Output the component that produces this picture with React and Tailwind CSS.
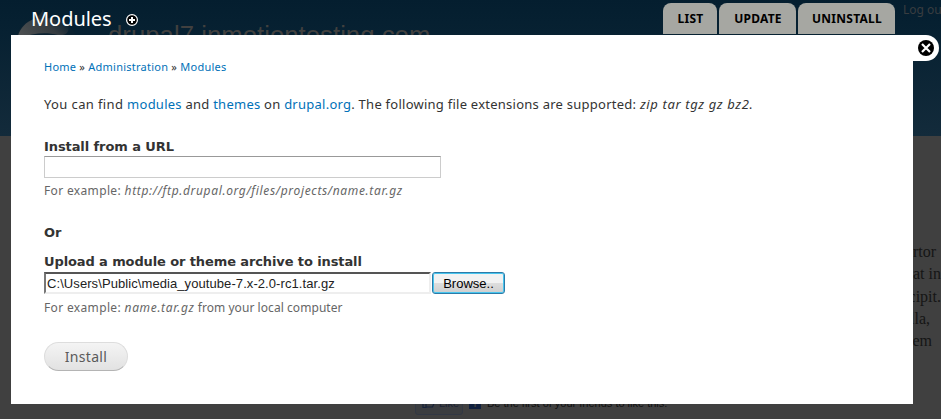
const tabs = [
  { label: "LIST", width: "w-[54px]" },
  { label: "UPDATE", width: "w-[77px]" },
  { label: "UNINSTALL", width: "w-[97px]" },
];

const excerpt = [
  { text: "tortor", pad: "pr-[5px]" },
  { text: "erat in", pad: "pr-0" },
  { text: "suscipit.", pad: "pr-0" },
  { text: "nulla,", pad: "pr-[11px]" },
  { text: "sem", pad: "pr-[9px]" },
];

function Logo() {
  return (
    <svg className="ml-[14px] mt-[6px] shrink-0" width="66" height="70" viewBox="0 0 66 70">
      <defs>
        <linearGradient id="shine" x1="0" y1="0.6" x2="1" y2="0.2">
          <stop offset="0" stopColor="#4b4e50" />
          <stop offset="0.6" stopColor="#353c41" />
          <stop offset="1" stopColor="#0b2130" />
        </linearGradient>
      </defs>
      <path d="M29 3C27 10 20 12 13 16C5 21 1 29 1 39C1 56 15 68 32 68C49 68 64 56 64 39C64 26 56 20 46 15C37 11 32 10 29 3Z" fill="#0b2231" />
      <path d="M4 30C6 22 12 16 20 13C30 10 46 13 54 20C56 26 52 30 44 29C32 26 20 27 4 32Z" fill="url(#shine)" />
      <path d="M29 3C27 9 23 11 19 13L34 13C31 10 30 7 29 3Z" fill="#202d35" />
    </svg>
  );
}

function Backdrop() {
  return (
    <div className="flex h-full flex-col bg-[#404040]">
      <div className="flex h-[136px] shrink-0 items-start bg-linear-to-b from-[#041e2f] to-[#132b3b]">
        <Logo />
        <div className="ml-[28px] mt-[20px] font-['Liberation_Sans',sans-serif] text-[25.7px] leading-[30px] tracking-[0.04px] whitespace-nowrap text-[#41403f]">
          drupal7.inmotiontesting.com
        </div>
        <div className="ml-auto w-[38px] font-['Noto_Sans',sans-serif] text-[12px] leading-5 whitespace-nowrap text-[#393d40]">
          Log ou
        </div>
      </div>
      <div className="flex flex-col items-end pt-[105px] font-['Liberation_Serif',serif] text-[16px] leading-[22.3px] text-[#151515]">
        {excerpt.map(({ text, pad }) => (
          <div key={text} className={pad}>{text}</div>
        ))}
      </div>
      <div className="mt-[38.5px] ml-[415px] flex h-6 items-center font-['Liberation_Sans',sans-serif] text-[11px] text-[#111]">
        <div className="flex h-6 w-12 items-center rounded-[3px] border border-[#323844] bg-[#3b3d40] pl-1.5 text-[#1b2233]">
          <svg width="14" height="14" viewBox="0 0 14 14" fill="none" stroke="#172239" strokeWidth="1.2">
            <path d="M1 5.5h3v6H1zM4 6l3-4.500 1.500 1-.5 3h4v2l-1.500 3.500H4" />
          </svg>
          <span className="ml-[3px]">Like</span>
        </div>
        <div className="ml-[6px] mt-px flex size-3 justify-center bg-[#10203f] text-[11px] leading-[13px] font-bold text-[#404040]">f</div>
        <div className="ml-[6px] whitespace-nowrap">Be the first of your friends to like this.</div>
      </div>
    </div>
  );
}

function TitleBar() {
  return (
    <div className="flex h-[35px] w-[895px] pl-[31px]">
      <h1 className="mt-[7px] font-['Noto_Sans',sans-serif] text-[20px] leading-6 tracking-[-0.05px] text-white">Modules</h1>
      <svg className="mt-[13px] ml-[13.500px]" width="14" height="14" viewBox="0 0 14 14">
        <circle cx="7" cy="7" r="5.400" fill="#000" stroke="#fff" strokeWidth="1.200" />
        <path d="M7 4v6M4 7h6" stroke="#fff" strokeWidth="2" />
      </svg>
      <div className="mt-[3px] ml-auto flex h-[31px] gap-0.5">
        {tabs.map(({ label, width }) => (
          <div key={label} className={`${width} rounded-t-lg bg-[#a6a7a2] pt-[6px] pl-px text-center font-['Noto_Sans',sans-serif] text-[12px] leading-5 font-bold tracking-[0.25px] text-black`}>
            {label}
          </div>
        ))}
      </div>
    </div>
  );
}

function Link({ children }) {
  return <span className="text-[#0071b8]">{children}</span>;
}

function Dialog() {
  return (
    <div className="ml-[11px] flex items-start font-['Noto_Sans',sans-serif] whitespace-nowrap text-[#333]">
      <div className="h-[369px] w-[902px] bg-white px-[33px] pt-6">
        <div className="text-[11px] leading-4 tracking-[0.24px]">
          <Link>Home</Link> » <Link>Administration</Link> » <Link>Modules</Link>
        </div>
        <p className="mt-[19px] text-[13px] leading-5 tracking-[0.25px]">
          <span className="tracking-[0.38px]">You can find </span>
          <Link>modules</Link> and <Link>themes</Link> on <Link>drupal.org</Link>. The following file extensions are supported:{" "}
          <em className="tracking-[0.62px]">zip tar tgz gz bz2.</em>
        </p>
        <div className="mt-6 font-['DejaVu_Sans',sans-serif] text-[13px] leading-[18px] font-bold tracking-[-0.09px]">Install from a URL</div>
        <div className="h-[22px] w-[397px] border border-[#ccc] border-t-[#999] bg-white" />
        <div className="mt-[5px] text-[12px] leading-4 tracking-[0.35px] text-[#666]">
          For example: <em className="tracking-[0.65px]">http://ftp.drupal.org/files/projects/name.tar.gz</em>
        </div>
        <div className="mt-[25px] font-['DejaVu_Sans',sans-serif] text-[13px] leading-[18px] font-bold tracking-[-0.09px]">Or</div>
        <div className="mt-[11px] font-['DejaVu_Sans',sans-serif] text-[13px] leading-[18px] font-bold tracking-[-0.11px]">Upload a module or theme archive to install</div>
        <div className="mt-px flex h-[22px] font-['Liberation_Sans',sans-serif] text-[13px] text-black">
          <div className="w-[387px] border-2 border-t-[#555] border-r-[#eee] border-b-[#eee] border-l-[#777] pl-px leading-[19px] tracking-[0.08px] text-[#222]">
            C:\Users\Public\media_youtube-7.x-2.0-rc1.tar.gz
          </div>
          <div className="ml-px w-[73px] rounded-[3px] border border-[#2c7ba8] bg-linear-to-b from-[#f2f2f2] from-50% via-[#dedede] via-50% to-[#cfcfcf] text-center leading-[21px] shadow-[inset_0_0_0_1px_#48c5ee]">
            Browse..
          </div>
        </div>
        <div className="mt-[6px] text-[12px] leading-4 tracking-[0.06px] text-[#666]">
          <span className="tracking-[0.35px]">For example: </span>
          <em className="tracking-[0.65px]">name.tar.gz</em> from your local computer
        </div>
        <div className="mt-[26px] h-[29px] w-[84px] rounded-full border border-[#ddd] border-b-[#b4b4b4] bg-linear-to-b from-[#f4f4f4] to-[#e2e2e2] text-center text-[14px] leading-[27px] tracking-[0.3px] text-[#5a5a5a]">
          Install
        </div>
      </div>
      <div className="flex size-[26px] items-center justify-center rounded-r-full bg-white">
        <svg width="16" height="16" viewBox="0 0 16 16">
          <circle cx="8" cy="8" r="8" fill="#000" />
          <path d="M4 4l8 8M12 4l-8 8" stroke="#fff" strokeWidth="2.200" />
        </svg>
      </div>
    </div>
  );
}

export default function App() {
  return (
    <div className="relative h-[419px] w-[941px] overflow-hidden">
      <Backdrop />
      <div className="absolute inset-0">
        <TitleBar />
        <Dialog />
      </div>
    </div>
  );
}
